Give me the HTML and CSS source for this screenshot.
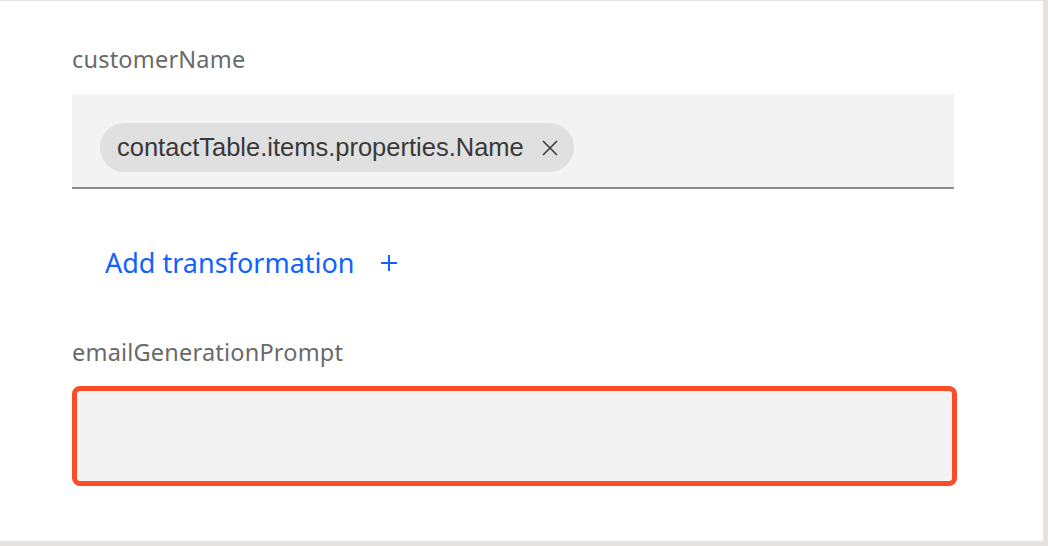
FILE: index.html
```html
<!DOCTYPE html>
<html>
<head>
<meta charset="utf-8">
<link rel="stylesheet" href="styles.css">
</head>
<body>
<div class="panel">
  <div class="field-group">
    <label class="label">customerName</label>
    <div class="token-input">
      <span class="chip">
        <span class="chip-text">contactTable.items.properties.Name</span>
        <svg class="chip-close" width="16" height="16" viewBox="0 0 16 16"><path d="M1 1 L15 15 M15 1 L1 15" stroke="#3d3d3d" stroke-width="1.6" fill="none"/></svg>
      </span>
    </div>
  </div>
  <button class="add-btn">
    <span>Add transformation</span>
    <svg width="18" height="18" viewBox="0 0 18 18"><path d="M9 1 V17 M1 9 H17" stroke="#0f62fe" stroke-width="2" fill="none"/></svg>
  </button>
  <div class="field-group second">
    <label class="label">emailGenerationPrompt</label>
    <div class="textarea-box"></div>
  </div>
</div>
</body>
</html>
```
FILE: styles.css
```css
html, body {
  margin: 0;
  padding: 0;
}
body {
  background: #e6e2e2;
  width: 1048px;
  height: 546px;
  overflow: hidden;
}
.panel {
  background: #ffffff;
  width: 1043px;
  height: 540px;
  margin-top: 1px;
  padding: 45px 0 0 72px;
  box-sizing: border-box;
  display: flex;
  flex-direction: column;
  align-items: flex-start;
}
.field-group {
  display: flex;
  flex-direction: column;
}
.label {
  font-family: "Noto Sans", sans-serif;
  font-size: 23.5px;
  line-height: 26px;
  color: #6a6a6a;
  letter-spacing: 0.2px;
}
.token-input {
  margin-top: 22px;
  width: 882px;
  height: 95px;
  background: #f3f3f3;
  border-bottom: 2px solid #8a8a8a;
  box-sizing: border-box;
  padding: 29px 0 0 28px;
}
.chip {
  display: inline-flex;
  align-items: center;
  height: 49px;
  padding: 0 16px 0 17px;
  background: #e0e0e0;
  border-radius: 25px;
  box-sizing: border-box;
}
.chip-text {
  font-family: "Liberation Sans", Arial, sans-serif;
  font-size: 25.5px;
  color: #393939;
}
.chip-close {
  margin-left: 18px;
}
.add-btn {
  margin: 56px 0 0 33px;
  padding: 0;
  border: none;
  background: none;
  display: flex;
  align-items: center;
  gap: 25px;
  font-family: "Noto Sans", sans-serif;
  font-size: 27px;
  color: #0f62fe;
  line-height: 36px;
}
.second {
  margin-top: 58px;
}
.textarea-box {
  margin-top: 21px;
  width: 885px;
  height: 100px;
  background: #f3f3f3;
  border: 5px solid #fa4d26;
  border-radius: 8px;
  box-sizing: border-box;
}
```
